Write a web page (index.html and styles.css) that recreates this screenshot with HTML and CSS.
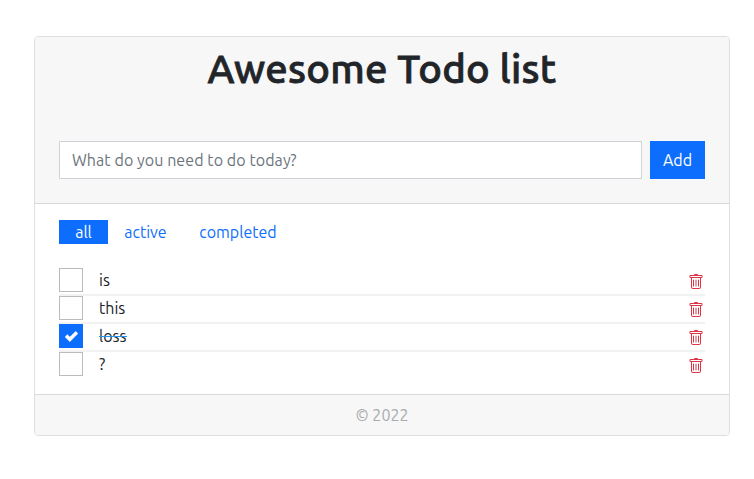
FILE: index.html
```html
<!DOCTYPE html>
<html lang="en">
<head>
<meta charset="utf-8">
<title>Awesome Todo list</title>
<link rel="stylesheet" href="styles.css">
</head>
<body>
<svg width="0" height="0" class="defs">
  <symbol id="trash" viewBox="0 0 16 16">
    <path d="M5.5 5.5A.5.5 0 0 1 6 6v6a.5.5 0 0 1-1 0V6a.5.5 0 0 1 .5-.5zm2.5 0a.5.5 0 0 1 .5.5v6a.5.5 0 0 1-1 0V6a.5.5 0 0 1 .5-.5zm3 .5a.5.5 0 0 0-1 0v6a.5.5 0 0 0 1 0V6z"/>
    <path fill-rule="evenodd" d="M14.5 3a1 1 0 0 1-1 1H13v9a2 2 0 0 1-2 2H5a2 2 0 0 1-2-2V4h-.5a1 1 0 0 1-1-1V2a1 1 0 0 1 1-1H6a1 1 0 0 1 1-1h2a1 1 0 0 1 1 1h3.5a1 1 0 0 1 1 1v1zM4.118 4 4 4.059V13a1 1 0 0 0 1 1h6a1 1 0 0 0 1-1V4.059L11.882 4H4.118zM2.5 3V2h11v1h-11z"/>
  </symbol>
</svg>
<main class="card">
  <header class="card-header">
    <h1>Awesome Todo list</h1>
    <form class="add-form">
      <input class="field" type="text" placeholder="What do you need to do today?">
      <button class="add" type="button">Add</button>
    </form>
  </header>
  <section class="card-body">
    <nav class="filters">
      <a class="filter all current">all</a>
      <a class="filter active">active</a>
      <a class="filter completed">completed</a>
    </nav>
    <ul class="todos">
      <li class="todo"><span class="check"></span><span class="label">is</span><svg class="trash"><use href="#trash"/></svg></li>
      <li class="todo"><span class="check"></span><span class="label">this</span><svg class="trash"><use href="#trash"/></svg></li>
      <li class="todo done"><span class="check"><svg class="tick" viewBox="0 0 8 8"><path d="M6.564.75l-3.59 3.612-1.538-1.55L0 4.26l2.974 2.99L8 2.193z"/></svg></span><span class="label">loss</span><svg class="trash"><use href="#trash"/></svg></li>
      <li class="todo"><span class="check"></span><span class="label">?</span><svg class="trash"><use href="#trash"/></svg></li>
    </ul>
  </section>
  <footer class="card-footer">© 2022</footer>
</main>
</body>
</html>
```
FILE: styles.css
```css
* { box-sizing: border-box; }
body {
  margin: 0;
  padding: 36px 24px 0 34px;
  background: #fff;
  color: #212529;
  font: 16px/24px Ubuntu, "Noto Sans", sans-serif;
}
.defs { position: absolute; }
.card {
  height: 400px;
  border: 1px solid #dfdfdf;
  border-radius: 4px;
  overflow: hidden;
  display: flex;
  flex-direction: column;
}
.card-header {
  height: 167px;
  padding: 8px 24px 0;
  background: #f7f7f7;
  border-bottom: 1px solid #d8d8d8;
}
h1 {
  margin: 0 0 48px;
  font-size: 40px;
  line-height: 48px;
  font-weight: 500;
  letter-spacing: 0.25px;
  -webkit-text-stroke: 0.8px #212529;
  text-align: center;
}
.add-form { display: flex; gap: 8px; }
.field {
  flex: 1;
  height: 38px;
  padding: 0 12px;
  border: 1px solid #ced4da;
  background: #fff;
  font: inherit;
  letter-spacing: 0.07px;
}
.field::placeholder { color: #6c757d; opacity: 1; }
.add {
  width: 55px;
  height: 38px;
  padding: 0;
  border: 0;
  background: #0d6efd;
  color: #fff;
  font: inherit;
}
.card-body { flex: 1; padding: 16px 24px 0; }
.filters { display: flex; margin-bottom: 24px; }
.filter { height: 24px; text-align: center; color: #0d6efd; }
.all { width: 49px; }
.active { width: 75px; }
.completed { width: 110px; }
.current { background: #0d6efd; color: #fff; }
.todos { margin: 0; padding: 0; list-style: none; }
.todo {
  display: flex;
  height: 28px;
  border-bottom: 2px solid #f2f2f2;
}
.todo:last-child { border-bottom: 0; }
.check {
  display: flex;
  align-items: center;
  justify-content: center;
  width: 24px;
  height: 24px;
  margin-right: 16px;
  border: 1px solid #b9bbbd;
}
.done .check { background: #0d6efd; border-color: #0d6efd; }
.tick { width: 13px; height: 13px; fill: #fff; stroke: #fff; stroke-width: 0.2; stroke-linejoin: round; }
.done .label { position: relative; height: 24px; }
.done .label::after {
  content: "";
  position: absolute;
  top: 12px;
  left: 0;
  width: 28px;
  height: 1px;
  background: #2196f3;
}
.trash {
  width: 16px;
  height: 16px;
  margin: 6px 1px 0 auto;
  fill: #dc3545;
}
.card-footer {
  height: 41px;
  padding-top: 8px;
  background: #f7f7f7;
  border-top: 1px solid #d8d8d8;
  color: #a9abac;
  text-align: center;
}
```
